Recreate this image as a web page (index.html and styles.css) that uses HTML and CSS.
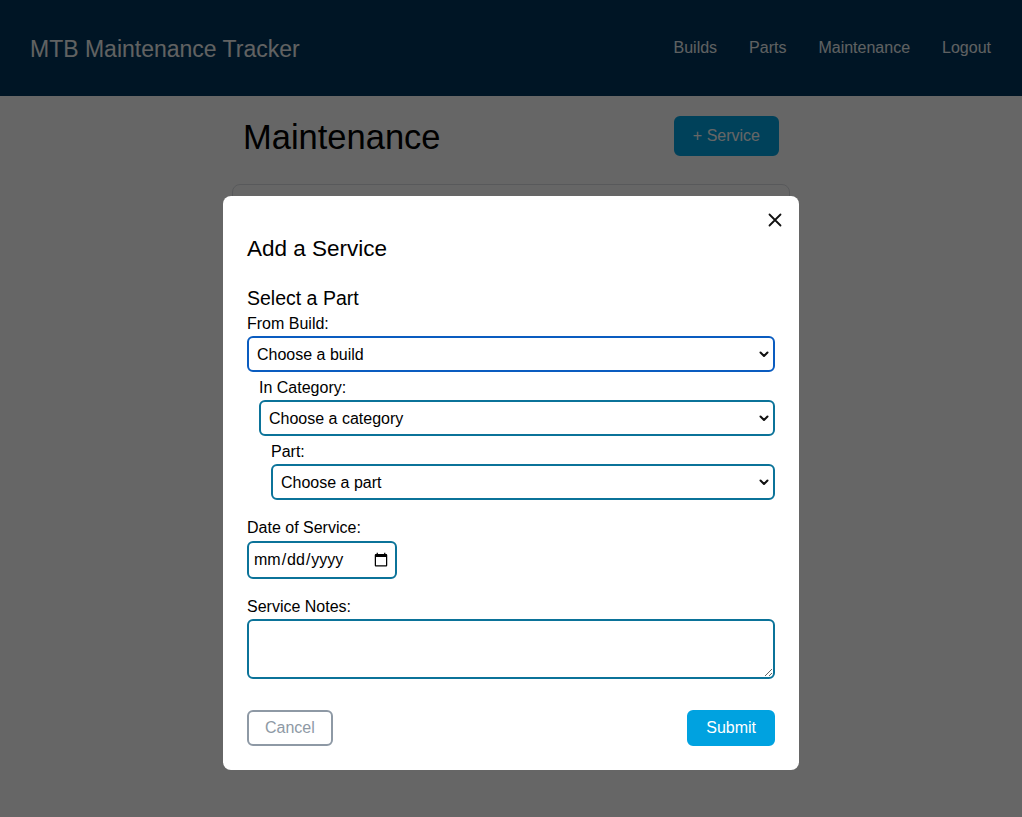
FILE: index.html
```html
<!DOCTYPE html>
<html lang="en">
<head>
<meta charset="utf-8">
<title>MTB Maintenance Tracker</title>
<link rel="stylesheet" href="styles.css">
</head>
<body>
<header class="navbar">
  <a class="brand" href="#">MTB Maintenance Tracker</a>
  <nav class="nav-links">
    <a href="#">Builds</a>
    <a href="#">Parts</a>
    <a href="#">Maintenance</a>
    <a href="#">Logout</a>
  </nav>
</header>

<main class="container">
  <div class="page-head">
    <h1 class="page-title">Maintenance</h1>
    <button class="btn btn-primary btn-add" type="button">+ Service</button>
  </div>
  <div class="card"></div>
</main>

<div class="backdrop">
  <div class="modal" role="dialog" aria-labelledby="modal-title">
    <div class="modal-top">
      <button class="close" type="button" aria-label="Close">
        <svg width="14" height="14" viewBox="0 0 14 14"><path d="M1.5 1.5 L12.5 12.5 M12.5 1.5 L1.5 12.5" stroke="#111" stroke-width="1.8" stroke-linecap="round" fill="none"/></svg>
      </button>
    </div>
    <h2 class="modal-title" id="modal-title">Add a Service</h2>
    <form class="form">
      <h3 class="section-title">Select a Part</h3>
      <label class="label" for="build">From Build:</label>
      <div class="select-wrap">
        <select id="build" class="select select-focus"><option>Choose a build</option></select>
        <svg class="chev" width="10" height="7" viewBox="0 0 10 7"><path d="M1.5 1.5 L5 5 L8.5 1.5" stroke="#111" stroke-width="2" fill="none" stroke-linecap="round" stroke-linejoin="round"/></svg>
      </div>
      <div class="nested">
        <label class="label" for="cat">In Category:</label>
        <div class="select-wrap">
          <select id="cat" class="select"><option>Choose a category</option></select>
          <svg class="chev" width="10" height="7" viewBox="0 0 10 7"><path d="M1.5 1.5 L5 5 L8.5 1.5" stroke="#111" stroke-width="2" fill="none" stroke-linecap="round" stroke-linejoin="round"/></svg>
        </div>
        <div class="nested">
          <label class="label" for="part">Part:</label>
          <div class="select-wrap">
            <select id="part" class="select"><option>Choose a part</option></select>
            <svg class="chev" width="10" height="7" viewBox="0 0 10 7"><path d="M1.5 1.5 L5 5 L8.5 1.5" stroke="#111" stroke-width="2" fill="none" stroke-linecap="round" stroke-linejoin="round"/></svg>
          </div>
        </div>
      </div>

      <label class="label gap-top" for="date">Date of Service:</label>
      <input id="date" class="date" type="date">

      <label class="label gap-top" for="notes">Service Notes:</label>
      <textarea id="notes" class="notes"></textarea>

      <div class="actions">
        <button class="btn btn-cancel" type="button">Cancel</button>
        <button class="btn btn-primary btn-submit" type="submit">Submit</button>
      </div>
    </form>
  </div>
</div>
</body>
</html>
```

FILE: styles.css
```css
* { box-sizing: border-box; }

html, body {
  margin: 0;
  height: 100%;
}

body {
  font-family: "Liberation Sans", Arial, sans-serif;
  font-size: 16px;
  color: #000;
  background: #fff;
  overflow: hidden;
}

.navbar {
  height: 96px;
  background: #00365c;
  display: flex;
  align-items: center;
  justify-content: space-between;
  padding: 0 31px 0 30px;
}

.brand {
  color: #f2f4f6;
  text-decoration: none;
  font-size: 23px;
  position: relative;
  top: 1px;
}

.nav-links {
  display: flex;
  gap: 32px;
}

.nav-links a {
  color: #eef2f5;
  text-decoration: none;
  font-size: 16px;
}

.container {
  width: 558px;
  margin: 0 auto;
}

.page-head {
  display: flex;
  align-items: center;
  justify-content: space-between;
  padding: 20px 11px 0 11px;
}

.page-title {
  margin: 0;
  font-weight: normal;
  font-size: 34.5px;
  line-height: 40px;
  position: relative;
  top: 1px;
}

.btn {
  font-family: inherit;
  font-size: 16px;
  border-radius: 6px;
  cursor: pointer;
}

.btn-primary {
  background: #00a2e0;
  border: 2px solid #00a2e0;
  color: #fff;
}

.btn-add {
  height: 40px;
  padding: 0 17px;
}

.card {
  margin-top: 28px;
  height: 420px;
  border: 1px solid #dcdfe3;
  border-radius: 8px;
}

.backdrop {
  position: fixed;
  inset: 0;
  background: rgba(0, 0, 0, 0.6);
  display: flex;
  justify-content: center;
  align-items: flex-start;
  padding-top: 196px;
}

.modal {
  width: 576px;
  background: #fff;
  border-radius: 8px;
  padding: 12px 24px 24px 24px;
}

.modal-top {
  display: flex;
  justify-content: flex-end;
  height: 24px;
}

.close {
  width: 24px;
  height: 24px;
  padding: 0;
  margin-right: -12px;
  border: 0;
  background: transparent;
  display: flex;
  align-items: center;
  justify-content: center;
  cursor: pointer;
}

.modal-title {
  margin: 4px 0 0 0;
  font-weight: normal;
  font-size: 22.5px;
  line-height: 26px;
}

.form {
  display: flex;
  flex-direction: column;
}

.section-title {
  margin: 24px 0 2px 0;
  font-weight: normal;
  font-size: 19.5px;
  line-height: 24px;
}

.label {
  display: block;
  line-height: 24px;
  font-size: 16px;
}

.gap-top {
  margin-top: 16px;
}

.nested {
  margin-left: 12px;
  margin-top: 4px;
  display: flex;
  flex-direction: column;
}

.select-wrap {
  position: relative;
}

.select {
  appearance: none;
  -webkit-appearance: none;
  width: 100%;
  height: 36px;
  border: 2px solid #0b7399;
  border-radius: 6px;
  background: #fff;
  font-family: inherit;
  font-size: 16px;
  color: #000;
  padding: 0 32px 0 8px;
  outline: none;
}

.select-focus {
  border-color: #0a5cc0;
}

.chev {
  position: absolute;
  right: 6px;
  top: 15px;
  pointer-events: none;
}

.date {
  width: 150px;
  height: 38px;
  margin-top: 1px;
  border: 2px solid #0b7399;
  border-radius: 6px;
  padding: 0 4px;
  font-family: inherit;
  font-size: 16px;
  color: #000;
  background: #fff;
}

.notes {
  width: 100%;
  height: 60px;
  border: 2px solid #0b7399;
  border-radius: 6px;
  font-family: inherit;
  font-size: 16px;
  padding: 6px 8px;
  display: block;
}

.actions {
  display: flex;
  justify-content: space-between;
  margin-top: 31px;
}

.btn-cancel {
  height: 36px;
  padding: 0 16px;
  background: #fff;
  border: 2px solid #8e99a5;
  color: #8e99a5;
}

.btn-submit {
  height: 36px;
  padding: 0 17px;
}
```
